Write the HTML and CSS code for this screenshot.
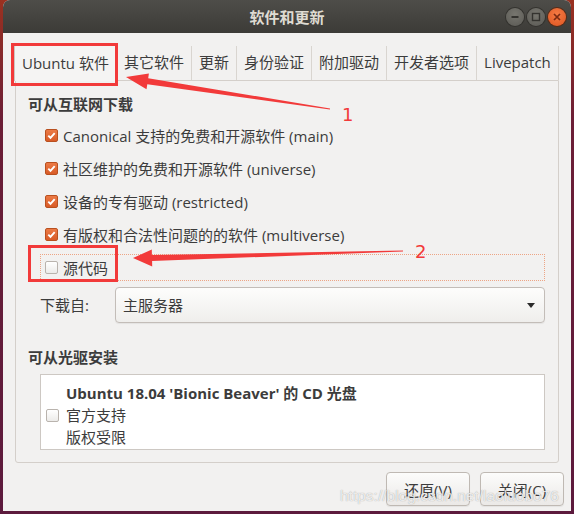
FILE: index.html
```html
<!DOCTYPE html>
<html lang="zh-CN">
<head>
    <meta charset="UTF-8">
    <meta name="viewport" content="width=device-width, initial-scale=1.0">
    <title>软件和更新</title>
    <link rel="stylesheet" href="styles.css">
</head>
<body>
    <div class="window">
        <div class="titlebar">
            <span class="title">软件和更新</span>
            <div class="controls">
                <span class="ctl">
                    <svg width="10" height="10" viewBox="0 0 10 10"><path d="M1.5 5h7" stroke="#34332f" stroke-width="1.8"/></svg>
                </span>
                <span class="ctl">
                    <svg width="10" height="10" viewBox="0 0 10 10"><rect x="1.5" y="1.5" width="7" height="7" fill="none" stroke="#34332f" stroke-width="1.4"/></svg>
                </span>
                <span class="ctl close">
                    <svg width="10" height="10" viewBox="0 0 10 10"><path d="M2 2l6 6M8 2l-6 6" stroke="#7c2a12" stroke-width="1.7"/></svg>
                </span>
            </div>
        </div>

        <div class="content">
            <div class="tabs">
                <div class="tab active">Ubuntu 软件</div>
                <div class="tab">其它软件</div>
                <div class="tab">更新</div>
                <div class="tab">身份验证</div>
                <div class="tab">附加驱动</div>
                <div class="tab">开发者选项</div>
                <div class="tab">Livepatch</div>
            </div>

            <div class="panel">
                <div class="heading">可从互联网下载</div>
                <div class="options">
                    <div class="option"><span class="check on"><svg width="11" height="11" viewBox="0 0 11 11"><path d="M2.3 5.6l2.2 2.3 4.2-4.8" fill="none" stroke="#fff" stroke-width="1.9"/></svg></span>Canonical 支持的免费和开源软件 (main)</div>
                    <div class="option"><span class="check on"><svg width="11" height="11" viewBox="0 0 11 11"><path d="M2.3 5.6l2.2 2.3 4.2-4.8" fill="none" stroke="#fff" stroke-width="1.9"/></svg></span>社区维护的免费和开源软件 (universe)</div>
                    <div class="option"><span class="check on"><svg width="11" height="11" viewBox="0 0 11 11"><path d="M2.3 5.6l2.2 2.3 4.2-4.8" fill="none" stroke="#fff" stroke-width="1.9"/></svg></span>设备的专有驱动 (restricted)</div>
                    <div class="option"><span class="check on"><svg width="11" height="11" viewBox="0 0 11 11"><path d="M2.3 5.6l2.2 2.3 4.2-4.8" fill="none" stroke="#fff" stroke-width="1.9"/></svg></span>有版权和合法性问题的的软件 (multiverse)</div>
                    <div class="option focus"><span class="check"></span>源代码</div>
                </div>

                <div class="source-row">
                    <span class="source-label">下载自:</span>
                    <div class="combo">
                        <span>主服务器</span>
                        <span class="combo-arrow"></span>
                    </div>
                </div>

                <div class="heading second">可从光驱安装</div>
                <div class="cdlist">
                    <div class="cditem">
                        <span class="check"></span>
                        <div class="cdtext">
                            <b>Ubuntu 18.04 'Bionic Beaver' 的 CD 光盘</b>
                            <span>官方支持</span>
                            <span>版权受限</span>
                        </div>
                    </div>
                </div>
            </div>

            <div class="buttons">
                <button class="btn">还原(V)</button>
                <button class="btn">关闭(C)</button>
            </div>
        </div>
    </div>

    <div class="watermark">https://blog.csdn.net/laoluobo76</div>

    <!-- red annotations drawn over the screenshot -->
    <svg class="marks" width="574" height="514" viewBox="0 0 574 514">
        <rect x="12.5" y="44.5" width="104" height="40" fill="none" stroke="#f23a3a" stroke-width="3"/>
        <rect x="29.5" y="246.5" width="87" height="34" fill="none" stroke="#f23a3a" stroke-width="3"/>
        <polygon points="126,77 148.9,73.4 148.2,78.3 330.1,108.5 329.9,109.5 147.3,84.3 146.5,89.2" fill="#f23a3a"/>
        <polygon points="133,258 151.8,249.5 151.9,255 403,250.5 403,251.5 152.1,261 152.2,266.5" fill="#f23a3a"/>
        <text x="342" y="121" class="mark-num">1</text>
        <text x="415" y="258" class="mark-num">2</text>
    </svg>
</body>
</html>
```

FILE: styles.css
```css
* { box-sizing: border-box; }

body {
    margin: 0;
    height: 514px;
    overflow: hidden;
    position: relative;
    background: linear-gradient(to bottom, #9a3120, #6c1e36 120px, #5c1a3d);
    font-family: "Open Sans", "Noto Sans CJK SC", sans-serif;
    font-size: 15px;
    color: #3c3c3c;
}

.window {
    margin: 0 3px;
    height: 511px;
    background: #f2f1f0;
    border-radius: 7px 7px 0 0;
    overflow: hidden;
}

/* title bar */
.titlebar {
    height: 33px;
    display: grid;
    grid-template-columns: 1fr auto 1fr;
    align-items: center;
    background: linear-gradient(#4e4d49, #3c3b37);
}
.title {
    grid-column: 2;
    color: #dfdbd2;
    font-weight: bold;
    line-height: 20px;
}
.controls {
    grid-column: 3;
    justify-self: end;
    display: flex;
    gap: 3px;
    padding-right: 5px;
}
.ctl {
    width: 18px;
    height: 18px;
    border-radius: 50%;
    display: flex;
    align-items: center;
    justify-content: center;
    background: radial-gradient(circle at 50% 35%, #77766f, #5a5954);
    box-shadow: 0 0 0 1px #33322e;
}
.ctl.close {
    background: radial-gradient(circle at 50% 35%, #f47a44, #e05520);
    box-shadow: 0 0 0 1px #5a2a14;
}

/* notebook */
.content {
    padding: 11px 12px 0;
}
.tabs {
    display: flex;
    height: 36px;
    margin-left: -1px;
    align-items: flex-end;
}
.tab {
    height: 34px;
    line-height: 32px;
    padding: 0 7px;
    border-right: 1px solid #d9d5d0;
    white-space: nowrap;
}
.tab.active {
    height: 37px;
    line-height: 36px;
    margin-bottom: -1px;
    position: relative;
    background: #f5f4f3;
    border: 1px solid #cdc7c1;
    border-bottom: none;
    border-radius: 3px 3px 0 0;
}
.panel {
    border: 1px solid #d4cfca;
    border-radius: 0 0 3px 3px;
    padding: 13px 0 12px;
}
.heading {
    padding-left: 12px;
    font-weight: bold;
    line-height: 20px;
}
.heading.second {
    margin-top: 24px;
}

.options {
    margin-top: 5px;
    padding: 3px 0;
    display: flex;
    flex-direction: column;
    gap: 6px;
}
.option {
    height: 27px;
    margin: 0 13px 0 24px;
    padding-left: 4px;
    border: 1px solid transparent;
    display: flex;
    align-items: center;
    line-height: 20px;
}
.option.focus {
    border: 1px dotted #eda585;
}

.check {
    width: 13px;
    height: 13px;
    flex: none;
    margin-right: 5px;
    border: 1px solid #b9b3ad;
    border-radius: 2px;
    background: linear-gradient(#ffffff, #ecebe9);
    display: flex;
    align-items: center;
    justify-content: center;
}
.check.on {
    border-color: #b9501f;
    background: linear-gradient(#ec7a45, #d85b27);
}

.source-row {
    margin: 3px 13px 0 24px;
    display: flex;
    align-items: center;
}
.source-label {
    width: 75px;
    line-height: 20px;
}
.combo {
    flex: 1;
    height: 36px;
    padding: 0 9px 0 7px;
    border: 1px solid #c3bdb8;
    border-radius: 4px;
    background: linear-gradient(#fdfdfc, #efeeec);
    box-shadow: 0 1px 1px rgba(0, 0, 0, 0.06);
    display: flex;
    align-items: center;
    justify-content: space-between;
    line-height: 20px;
}
.combo-arrow {
    width: 0;
    height: 0;
    border-left: 4px solid transparent;
    border-right: 4px solid transparent;
    border-top: 5px solid #2b2b2b;
}

.cdlist {
    margin: 7px 13px 0 24px;
    height: 76px;
    border: 1px solid #cdc8c3;
    background: #ffffff;
    padding: 7px 0 1px 5px;
}
.cditem {
    display: flex;
    align-items: center;
}
.cditem .check {
    margin-right: 7px;
}
.cdtext {
    display: flex;
    flex-direction: column;
    line-height: 22px;
}

.buttons {
    display: flex;
    justify-content: flex-end;
    gap: 10px;
    margin: 9px -5px 0 0;
}
.btn {
    width: 84px;
    height: 34px;
    padding: 0;
    font-family: inherit;
    font-size: 15px;
    color: #3c3c3c;
    border: 1px solid #bfb9b3;
    border-radius: 4px;
    background: linear-gradient(#fcfcfb, #ebe9e7);
    box-shadow: 0 1px 1px rgba(0, 0, 0, 0.06);
}

/* overlays */
.watermark {
    position: absolute;
    left: 340px;
    top: 486px;
    font-family: "Liberation Sans", sans-serif;
    font-size: 15.5px;
    line-height: 20px;
    color: rgba(255, 255, 255, 0.8);
    text-shadow: 0 0 1px rgba(90, 90, 90, 0.6);
}
.marks {
    position: absolute;
    left: 0;
    top: 0;
    pointer-events: none;
}
.mark-num {
    font-family: "DejaVu Sans", sans-serif;
    font-size: 18px;
    fill: #f23a3a;
}
```
